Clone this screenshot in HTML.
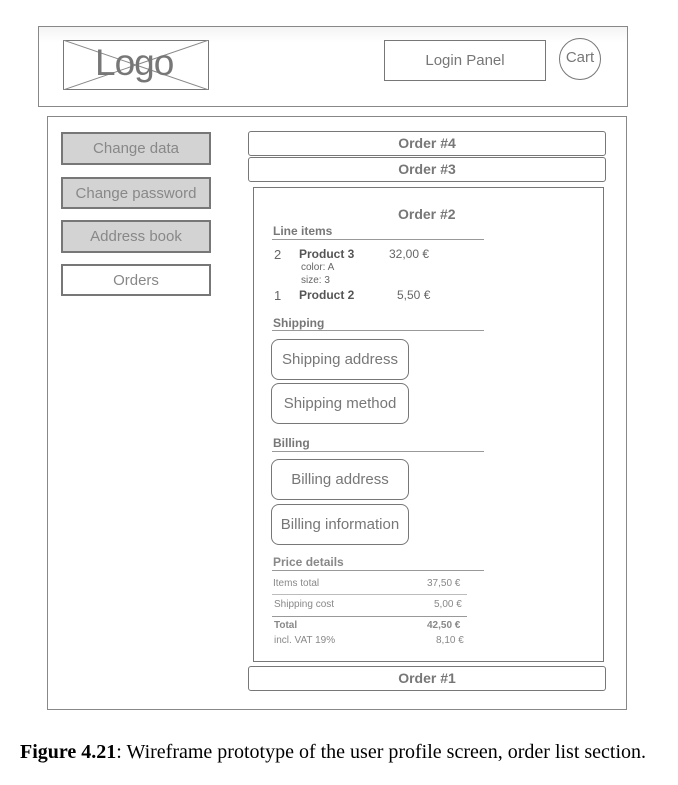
<!DOCTYPE html>
<html><head><style>
body{margin:0;width:678px;height:785px;background:#fff;position:relative;font-family:"Liberation Sans",sans-serif;color:#666;overflow:hidden}
.a{position:absolute}
.b{position:absolute;border:1.5px solid #777;box-sizing:border-box}
.t{position:absolute;white-space:nowrap}
.btn{position:absolute;box-sizing:border-box;border:2px solid #777;text-align:center;font-size:15px;color:#888}
.rb{position:absolute;box-sizing:border-box;border:1.5px solid #777;border-radius:8px;text-align:center;font-size:15px;color:#777;width:138px;height:41px;line-height:39px;left:271px}
.bar{position:absolute;left:248px;width:358px;height:25px;box-sizing:border-box;border:1.5px solid #777;text-align:center;font-weight:bold;font-size:14px;line-height:22px;color:#777;border-radius:3px}
.hl{position:absolute;height:0;border-top:1px solid #999}
.s{font-size:10px;color:#888}
</style></head><body>
<div class="b" style="left:38px;top:26px;width:590px;height:81px;border-color:#888;background:linear-gradient(#f4f4f4,#fff 20%)"></div>
<div class="b" style="left:63px;top:40px;width:146px;height:50px;"></div>
<svg class="a" style="left:63px;top:40px" width="146" height="50"><line x1="0" y1="0" x2="146" y2="50" stroke="#888"/><line x1="146" y1="0" x2="0" y2="50" stroke="#888"/></svg>
<div class="t" style="left:95px;top:42px;font-size:37px;color:#777;letter-spacing:-1px">Logo</div>
<div class="b" style="left:384px;top:40px;width:162px;height:41px;text-align:center;line-height:39px;font-size:15px;color:#777">Login Panel</div>
<div class="b" style="left:559px;top:38px;width:42px;height:42px;border-radius:50%;text-align:center;line-height:38px;font-size:15px;color:#777">Cart</div>
<div class="b" style="left:47px;top:116px;width:580px;height:594px;border-color:#888"></div>
<div class="btn" style="left:61px;top:132px;width:150px;height:33px;line-height:30px;background:#d3d3d3">Change data</div>
<div class="btn" style="left:61px;top:177px;width:150px;height:32px;line-height:29px;background:#d3d3d3">Change password</div>
<div class="btn" style="left:61px;top:220px;width:150px;height:33px;line-height:30px;background:#d3d3d3">Address book</div>
<div class="btn" style="left:61px;top:264px;width:150px;height:32px;line-height:29px;background:#fff">Orders</div>
<div class="bar" style="top:131px">Order #4</div>
<div class="bar" style="top:157px">Order #3</div>
<div class="b" style="left:253px;top:187px;width:351px;height:475px"></div>
<div class="bar" style="top:666px">Order #1</div>
<div class="t" style="left:398px;top:206px;font-weight:bold;font-size:14px;color:#777">Order #2</div>
<div class="t" style="left:273px;top:224px;font-weight:bold;font-size:12px;color:#777">Line items</div>
<div class="hl" style="left:272px;top:239px;width:212px"></div>
<div class="t" style="left:274px;top:247px;font-size:13px">2</div>
<div class="t" style="left:299px;top:247px;font-size:12px;font-weight:bold;color:#555">Product 3</div>
<div class="t" style="left:389px;top:247px;font-size:12px">32,00 €</div>
<div class="t s" style="left:301px;top:262px;color:#666">color: A</div>
<div class="t s" style="left:301px;top:275px;color:#666">size: 3</div>
<div class="t" style="left:274px;top:288px;font-size:13px">1</div>
<div class="t" style="left:299px;top:288px;font-size:12px;font-weight:bold;color:#555">Product 2</div>
<div class="t" style="left:397px;top:288px;font-size:12px">5,50 €</div>
<div class="t" style="left:273px;top:316px;font-weight:bold;font-size:12px;color:#777">Shipping</div>
<div class="hl" style="left:272px;top:330px;width:212px"></div>
<div class="rb" style="top:339px">Shipping address</div>
<div class="rb" style="top:383px">Shipping method</div>
<div class="t" style="left:273px;top:436px;font-weight:bold;font-size:12px;color:#777">Billing</div>
<div class="hl" style="left:272px;top:451px;width:212px"></div>
<div class="rb" style="top:459px">Billing address</div>
<div class="rb" style="top:504px">Billing information</div>
<div class="t" style="left:273px;top:555px;font-weight:bold;font-size:12px;color:#888">Price details</div>
<div class="hl" style="left:272px;top:570px;width:212px"></div>
<div class="t s" style="left:273px;top:578px">Items total</div><div class="t s" style="left:427px;top:578px">37,50 €</div>
<div class="hl" style="left:272px;top:594px;width:195px;border-color:#bbb"></div>
<div class="t s" style="left:274px;top:599px">Shipping cost</div><div class="t s" style="left:434px;top:599px">5,00 €</div>
<div class="hl" style="left:272px;top:616px;width:195px"></div>
<div class="t s" style="left:274px;top:620px;font-weight:bold">Total</div><div class="t s" style="left:427px;top:620px;font-weight:bold">42,50 €</div>
<div class="t s" style="left:274px;top:635px">incl. VAT 19%</div><div class="t s" style="left:436px;top:635px">8,10 €</div>
<div class="t" style="left:20px;top:741px;font-family:'Liberation Serif',serif;font-size:20px;color:#000"><b>Figure 4.21</b>: Wireframe prototype of the user profile screen, order list section.</div>
</body></html>
